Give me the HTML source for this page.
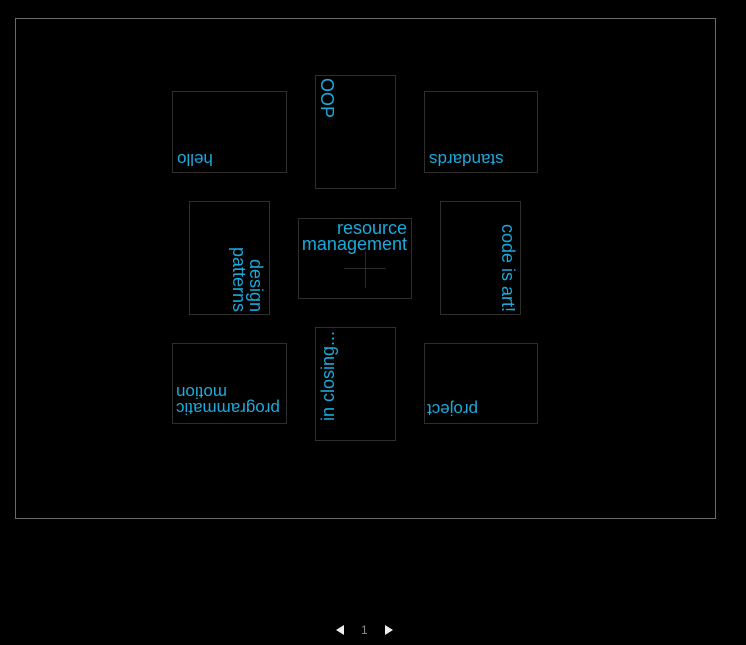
<!DOCTYPE html>
<html><head><meta charset="utf-8"><style>
html,body{margin:0;padding:0;background:#000;width:746px;height:645px;overflow:hidden;font-family:"Liberation Sans",sans-serif;}
.frame{position:absolute;left:15px;top:18px;width:699px;height:499px;border:1px solid #6a6a6a;}
.b{position:absolute;border:1px solid #2e2e2e;box-sizing:border-box;}
.t{position:absolute;color:#1ca9dc;font-size:17px;line-height:16px;white-space:nowrap;}
.v{writing-mode:vertical-rl;font-size:18px;}
.r{transform:rotate(180deg);}
</style></head><body>
<div class="frame"></div>
<div class="b" style="left:172px;top:91px;width:115px;height:82px"></div>
<div class="b" style="left:315px;top:75px;width:81px;height:114px"></div>
<div class="b" style="left:424px;top:91px;width:114px;height:82px"></div>
<div class="b" style="left:189px;top:201px;width:81px;height:114px"></div>
<div class="b" style="left:298px;top:218px;width:114px;height:81px"></div>
<div class="b" style="left:440px;top:201px;width:81px;height:114px"></div>
<div class="b" style="left:172px;top:343px;width:115px;height:81px"></div>
<div class="b" style="left:315px;top:327px;width:81px;height:114px"></div>
<div class="b" style="left:424px;top:343px;width:114px;height:81px"></div>

<div class="t r" style="left:177px;top:151px;">hello</div>
<div class="t v" style="left:318px;top:78px;width:17px;">OOP</div>
<div class="t r" style="left:429px;top:151px;">standards</div>
<div class="t v" style="left:230px;top:211px;width:34px;height:101px;line-height:17px;text-align:end;">design<br>patterns</div>
<div class="t" style="left:298px;top:220px;width:109px;text-align:right;font-size:18px;">resource<br>management</div>
<div style="position:absolute;left:344px;top:268px;width:42px;height:1px;background:#2a2a2a"></div>
<div style="position:absolute;left:365px;top:251px;width:1px;height:37px;background:#2a2a2a"></div>
<div class="t v" style="left:499px;top:211px;width:17px;height:101px;text-align:end;">code is art!</div>
<div class="t r" style="left:176px;top:384px;width:106px;height:32px;text-align:right;">programmatic<br>motion</div>
<div class="t v r" style="left:320px;top:329px;width:17px;height:92px;">in closing...</div>
<div class="t r" style="left:427px;top:401px;">project</div>

<svg style="position:absolute;left:336px;top:624px" width="60" height="14">
<polygon points="0,6 8,1 8,11" fill="#eee"/>
<polygon points="49,1 57,6 49,11" fill="#eee"/>
</svg>
<div style="position:absolute;left:361px;top:623px;color:#888;font-size:12px;">1</div>
</body></html>
